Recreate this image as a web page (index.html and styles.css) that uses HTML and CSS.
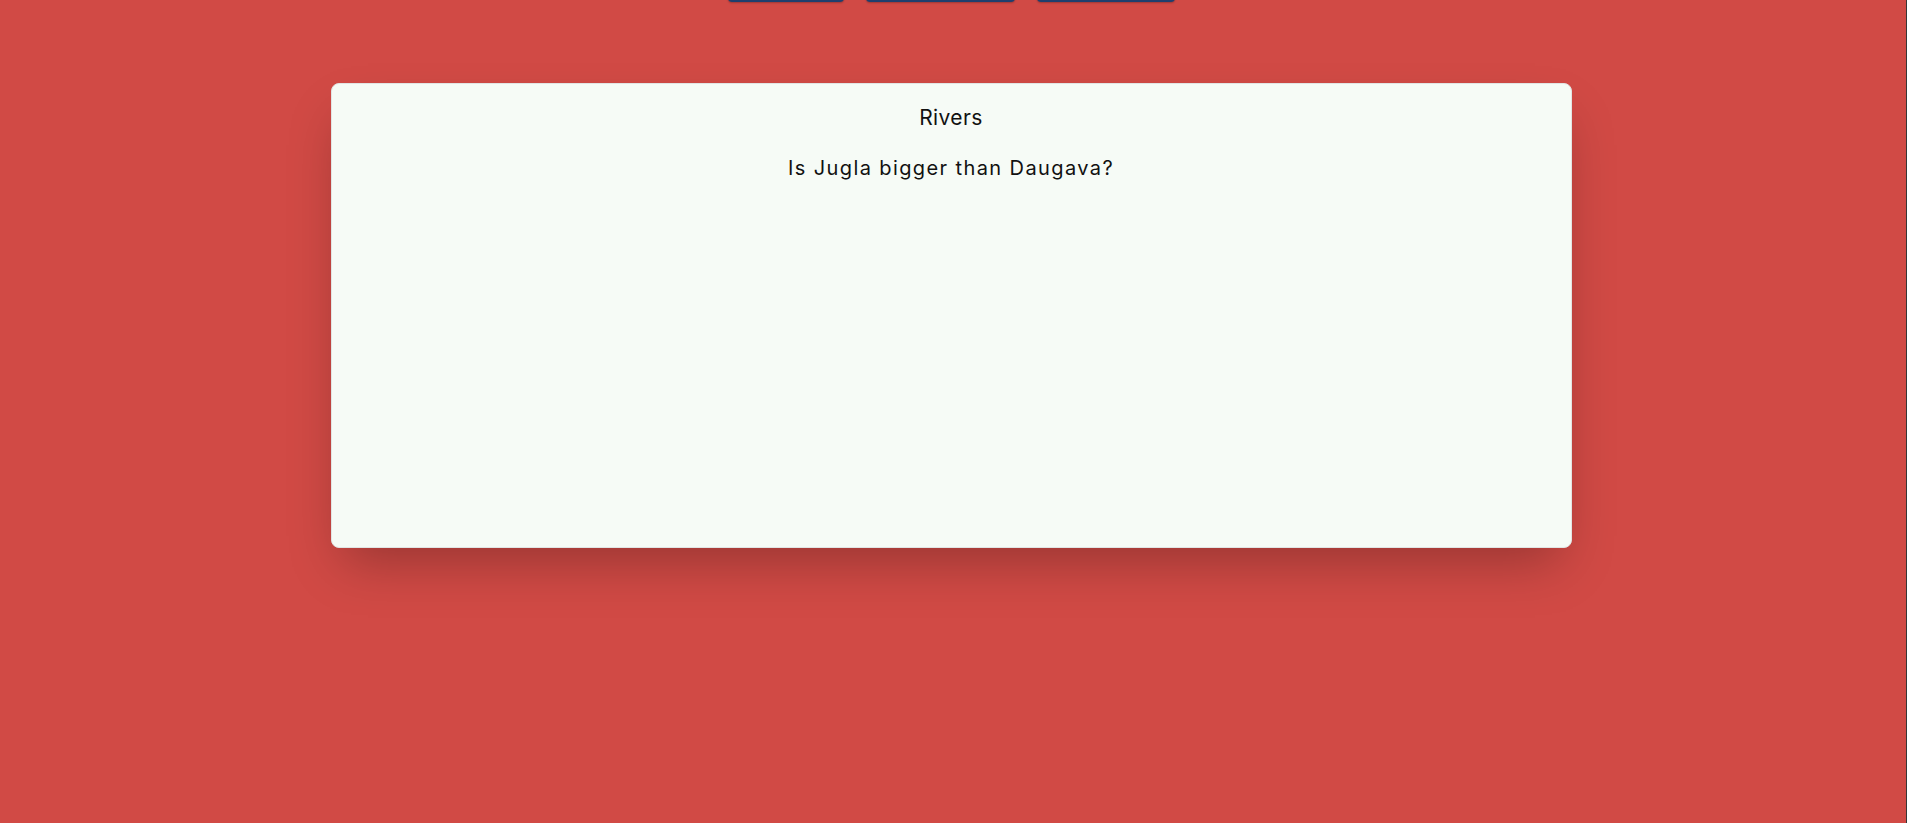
FILE: index.html
```html
<!DOCTYPE html>
<html lang="en">
<head>
<meta charset="utf-8">
<title>Rivers</title>
<link rel="stylesheet" href="styles.css">
</head>
<body>
<div class="page">
  <nav class="nav">
    <div class="nav-btn btn-a"></div>
    <div class="nav-btn btn-b"></div>
    <div class="nav-btn btn-c"></div>
  </nav>
  <main class="card">
    <h2 class="card-title">Rivers</h2>
    <p class="card-question">Is Jugla bigger than Daugava?</p>
  </main>
</div>
</body>
</html>
```

FILE: styles.css
```css
html, body {
  margin: 0;
  padding: 0;
  height: 100%;
  overflow: hidden;
}
body {
  background: #d14a45;
  font-family: Inter, "Noto Sans", "DejaVu Sans", sans-serif;
  color: #111111;
}
.page {
  display: flow-root;
  height: 100vh;
  box-sizing: border-box;
  border-right: 1px solid #363636;
  padding-right: 4px;
}
.nav {
  display: flex;
  justify-content: center;
  gap: 22px;
  height: 40px;
  margin-top: -38px;
}
.nav-btn {
  height: 40px;
  background: #1e3f6e;
  border-radius: 4px;
  box-shadow: 0 1px 2px rgba(0, 0, 0, 0.25);
}
.btn-a { width: 116px; }
.btn-b { width: 149px; }
.btn-c { width: 138px; }
.card {
  width: 1241px;
  height: 465px;
  box-sizing: border-box;
  margin: 81px auto 0;
  background: #f6fbf6;
  border: 1px solid #e1e5e4;
  border-radius: 8px;
  box-shadow: 0 25px 50px -12px rgba(0, 0, 0, 0.28);
  padding-top: 20px;
  text-align: center;
}
.card-title {
  margin: 0;
  font-size: 21px;
  line-height: 28px;
  font-weight: 400;
  letter-spacing: 0.4px;
}
.card-question {
  margin: 23px 0 0;
  font-size: 20px;
  line-height: 26px;
  letter-spacing: 1.4px;
}
```
